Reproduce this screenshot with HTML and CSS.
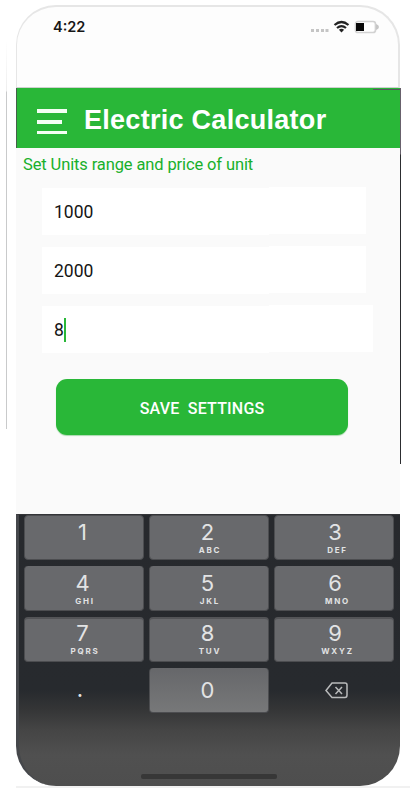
FILE: index.html
```html
<!DOCTYPE html>
<html lang="en">
<head>
<meta charset="utf-8">
<title>Electric Calculator</title>
<link rel="stylesheet" href="styles.css">
</head>
<body>
<div class="rail"></div>
<main class="phone">
  <div class="status">
    <span class="time">4:22</span>
    <svg class="indicators" width="72" height="16" viewBox="0 0 72 16">
      <g fill="#c5c5c5"><rect x="4" y="9" width="3" height="3"/><rect x="9" y="9" width="3" height="3"/><rect x="14" y="9" width="3" height="3"/><rect x="18.500" y="9" width="3" height="3"/></g>
      <g fill="none" stroke="#242424" stroke-width="2.200"><path d="M27.500 5Q34.500-1 41.500 5"/><path d="M30 8Q34.500 4.200 39 8"/></g>
      <path d="M31.900 9.800Q34.500 7.800 37.100 9.800L34.500 12.500Z" fill="#242424"/>
      <rect x="48.500" y="1.500" width="20" height="11" rx="2.500" fill="#fff" stroke="#d2d2d2" stroke-width="1.700"/>
      <rect x="49" y="3" width="8" height="8" fill="#080808"/>
      <path d="M69 4Q72 5 72 7T69 10Z" fill="#c6c6c6"/>
    </svg>
  </div>
  <header class="appbar">
    <svg class="menu" width="32" height="28" viewBox="0 0 32 28"><g fill="#f4fff4"><rect x="1" y="1" width="30" height="4"/><rect x="1" y="12" width="25" height="4"/><rect x="1" y="23" width="30" height="3"/></g></svg>
    <h1 class="title">Electric Calculator</h1>
  </header>
  <section class="settings">
    <p class="hint">Set Units range and price of unit</p>
    <div class="field">1000</div>
    <div class="field">2000</div>
    <div class="field field-active">8<span class="caret"></span></div>
    <button class="save">SAVE&nbsp; SETTINGS</button>
  </section>
  <section class="keypad">
    <div class="keys">
      <div class="key first"><b>1</b></div>
      <div class="key first"><b>2</b><small>ABC</small></div>
      <div class="key first last"><b>3</b><small>DEF</small></div>
      <div class="key"><b>4</b><small>GHI</small></div>
      <div class="key"><b>5</b><small>JKL</small></div>
      <div class="key last"><b>6</b><small>MNO</small></div>
      <div class="key third"><b>7</b><small>PQRS</small></div>
      <div class="key third"><b>8</b><small>TUV</small></div>
      <div class="key third last"><b>9</b><small>WXYZ</small></div>
      <div class="key plain"><b>.</b></div>
      <div class="key zero"><b>0</b></div>
      <div class="key plain"><svg width="24" height="17" viewBox="0 0 24 17" fill="none" stroke="#b9babb" stroke-width="1.500"><path d="M7 1H20Q22 1 22 3V13Q22 15.500 20 15.500H7L1 8.500Z"/><path d="M10.500 5L17 12M17 5L10.500 12"/></svg></div>
    </div>
    <div class="home"></div>
  </section>
</main>
<div class="baseline"></div>
</body>
</html>
```

FILE: styles.css
```css
* { box-sizing: border-box; }
body {
  position: relative;
  width: 410px;
  height: 800px;
  margin: 0;
  padding-top: 5px;
  overflow: hidden;
  background: #fff;
  font-family: Roboto, sans-serif;
}
.rail {
  position: absolute;
  left: 6px;
  top: 40px;
  width: 1px;
  height: 389px;
  background: linear-gradient(#fff, #eee 51px, #c9cacb 52px);
}
.phone { width: 384px; margin-left: 16px; }
.status {
  display: flex;
  justify-content: space-between;
  height: 83px;
  padding: 13px 19px 0 36px;
  border: 2px solid #e6e6e6;
  border-width: 2px 2px 1px 1px;
  border-bottom-color: #d0d0d0;
  border-radius: 40px 40px 0 0;
  background: #fdfdfd;
}
.time {
  color: #171717;
  font: 600 14.5px/14px Inter, sans-serif;
}
.indicators { margin-left: auto; }
.appbar {
  position: relative;
  display: flex;
  height: 60px;
  padding: 20px 0 0 20px;
  border-left: 1px solid #46604a;
  background: #29b738;
}
.appbar::after {
  content: "";
  position: absolute;
  right: 0;
  top: 1px;
  width: 27px;
  height: 1px;
  background: #59565f;
}
.menu { margin-left: -1px; flex: none; filter: blur(.3px); }
.title {
  margin: -4px 0 0 16px;
  color: #fff;
  font: bold 27px/32px "Liberation Sans", sans-serif;
  letter-spacing: .28px;
  white-space: nowrap;
}
.settings {
  position: relative;
  height: 366px;
  padding: 7px 0 0 26px;
  background: #fafafa;
}
.settings::after {
  content: "";
  position: absolute;
  left: 384px;
  top: -60px;
  width: 1px;
  height: 376px;
  background: linear-gradient(#68616c 66px, #2c2d30 67px);
}
.hint {
  margin: 0 0 12px -19px;
  color: #18b02b;
  font-size: 16.5px;
  line-height: 20px;
  letter-spacing: -.12px;
}
.field {
  display: flex;
  align-items: center;
  width: 324px;
  height: 48px;
  margin-bottom: 11px;
  padding: 1px 0 0 12px;
  background: #fff;
  clip-path: polygon(0 1px, 227px 1px, 227px 0, 100% 0, 100% 47px, 227px 47px, 227px 48px, 0 48px);
  color: #151515;
  font-size: 17.5px;
}
.field-active { width: 331px; }
.caret { width: 2px; height: 24px; background: #29b738; }
.save {
  display: block;
  width: 292px;
  height: 56px;
  margin: 26px 0 0 14px;
  padding: 3px 0 0;
  border: 0;
  border-radius: 11px;
  background: #29b738;
  box-shadow: 0 1px 1px #a8d9ad;
  color: #fff;
  font: 500 16px/20px Roboto, sans-serif;
  letter-spacing: .2px;
}
.keypad {
  height: 272px;
  padding: 0 6px 0 8px;
  border-top: 1px solid #343538;
  border-left: 3px solid #45474b;
  border-radius: 0 0 40px 40px;
  background: linear-gradient(#27292d 0, #272a2e 175px, #343536 194px, #454545 215px, #505050 240px, #4e4e4e 271px);
}
.keys {
  display: grid;
  grid-template-columns: repeat(3, 120px);
  grid-template-rows: repeat(4, 45px);
  gap: 6px 5px;
  margin-left: -3px;
}
.key {
  display: flex;
  flex-direction: column;
  align-items: center;
  padding-top: 5px;
  border: 1px solid #4c4d50;
  border-width: 0 1px 1px;
  border-radius: 4px;
  background: #68696c;
  color: #e2e3e4;
}
.key b { padding-right: 3px; font: 400 22px/24px Inter, sans-serif; }
.key small { padding-left: 2px; font: 700 8px/12px Inter, sans-serif; letter-spacing: 1.8px; }
.first { padding-top: 4px; border-top-width: 1px; }
.third { padding-top: 2px; border-top: 2px solid #535457; }
.last { padding-left: 5px; }
.plain { padding-top: 14px; border: 0; background: none; }
.plain b { padding-right: 8px; line-height: 14px; }
.plain svg { margin-left: 6px; }
.zero { padding-top: 10px; background: linear-gradient(#66676a, #777879); }
.home { width: 136px; height: 5px; margin: 61px auto 0 114px; border-radius: 2px; background: #373737; }
.baseline { height: 2px; margin: 0 0 0 16px; background: #f1f1f1; }
```
